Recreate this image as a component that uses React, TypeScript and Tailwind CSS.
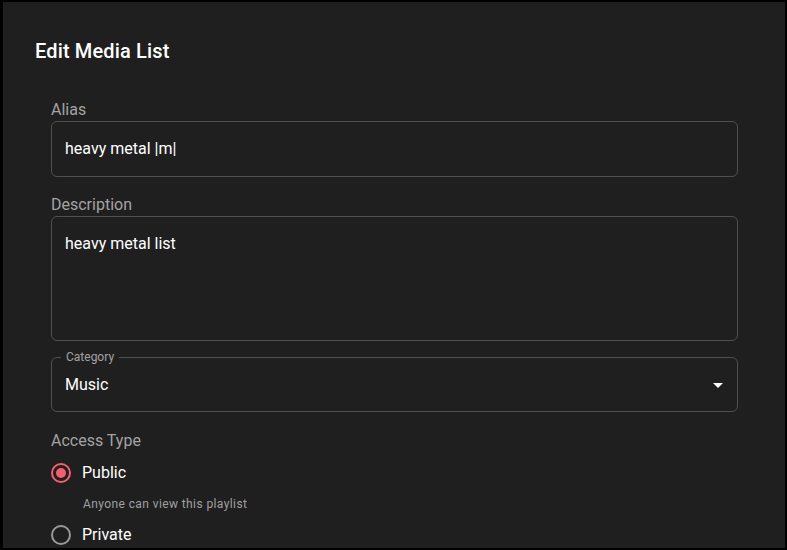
import React from 'react'

const font = { fontFamily: 'Roboto, "Liberation Sans", sans-serif' }

function Radio({ checked, label }: { checked?: boolean; label: string }) {
  return (
    <label className="flex items-center h-[42px] cursor-pointer">
      <span
        className={
          'flex items-center justify-center w-[20px] h-[20px] rounded-full border-2 ' +
          (checked ? 'border-[#f2606f]' : 'border-[#9a9a9a]')
        }
      >
        {checked && <span className="w-[10px] h-[10px] rounded-full bg-[#f2606f]" />}
      </span>
      <span className="ml-[11px] text-[16px] text-white">{label}</span>
    </label>
  )
}

export default function App() {
  return (
    <div className="w-[787px] h-[550px] bg-black pl-[3px] pt-[2px] pr-[2px] pb-[2px]" style={font}>
      <div className="w-full h-full bg-[#1f1f1f] overflow-hidden">
        {/* Title */}
        <div className="pl-[32px] pt-[33px] h-[64px] text-[20px] leading-[32px] font-medium tracking-[0.15px] text-white">
          Edit Media List
        </div>

        <div className="pl-[48px] pr-[47px] pt-[31px]">
          {/* Alias */}
          <div className="h-[24px] pt-[2px] text-[16px] leading-[22px] text-[#a3a3a3]">Alias</div>
          <div className="h-[56px] border border-[#505050] rounded-[6px] flex items-center px-[13px] text-[16px] text-white">
            heavy metal |m|
          </div>

          {/* Description */}
          <div className="mt-[15px] h-[24px] pt-[2px] text-[16px] leading-[22px] text-[#a3a3a3]">Description</div>
          <div className="h-[125px] border border-[#505050] rounded-[6px] px-[13px] pt-[15px] text-[16px] leading-[24px] text-white">
            heavy metal list
          </div>

          {/* Category */}
          <div className="relative mt-[16px] h-[55px] border border-[#505050] rounded-[6px] flex items-center justify-between pl-[13px] pr-[7px]">
            <span className="absolute left-[9px] -top-[9px] px-[5px] bg-[#1f1f1f] text-[12px] leading-[16px] text-[#a3a3a3]">
              Category
            </span>
            <span className="text-[16px] text-white">Music</span>
            <svg width="24" height="24" viewBox="0 0 24 24" className="fill-white">
              <path d="M7 10l5 5 5-5z" />
            </svg>
          </div>

          {/* Access type */}
          <div className="mt-[16px] h-[24px] pt-[2px] text-[16px] leading-[22px] text-[#a3a3a3]">Access Type</div>
          <Radio checked label="Public" />
          <div className="pl-[32px] text-[12px] leading-[20px] text-[#a0a0a0] tracking-[0.4px]">
            Anyone can view this playlist
          </div>
          <Radio label="Private" />
        </div>
      </div>
    </div>
  )
}
